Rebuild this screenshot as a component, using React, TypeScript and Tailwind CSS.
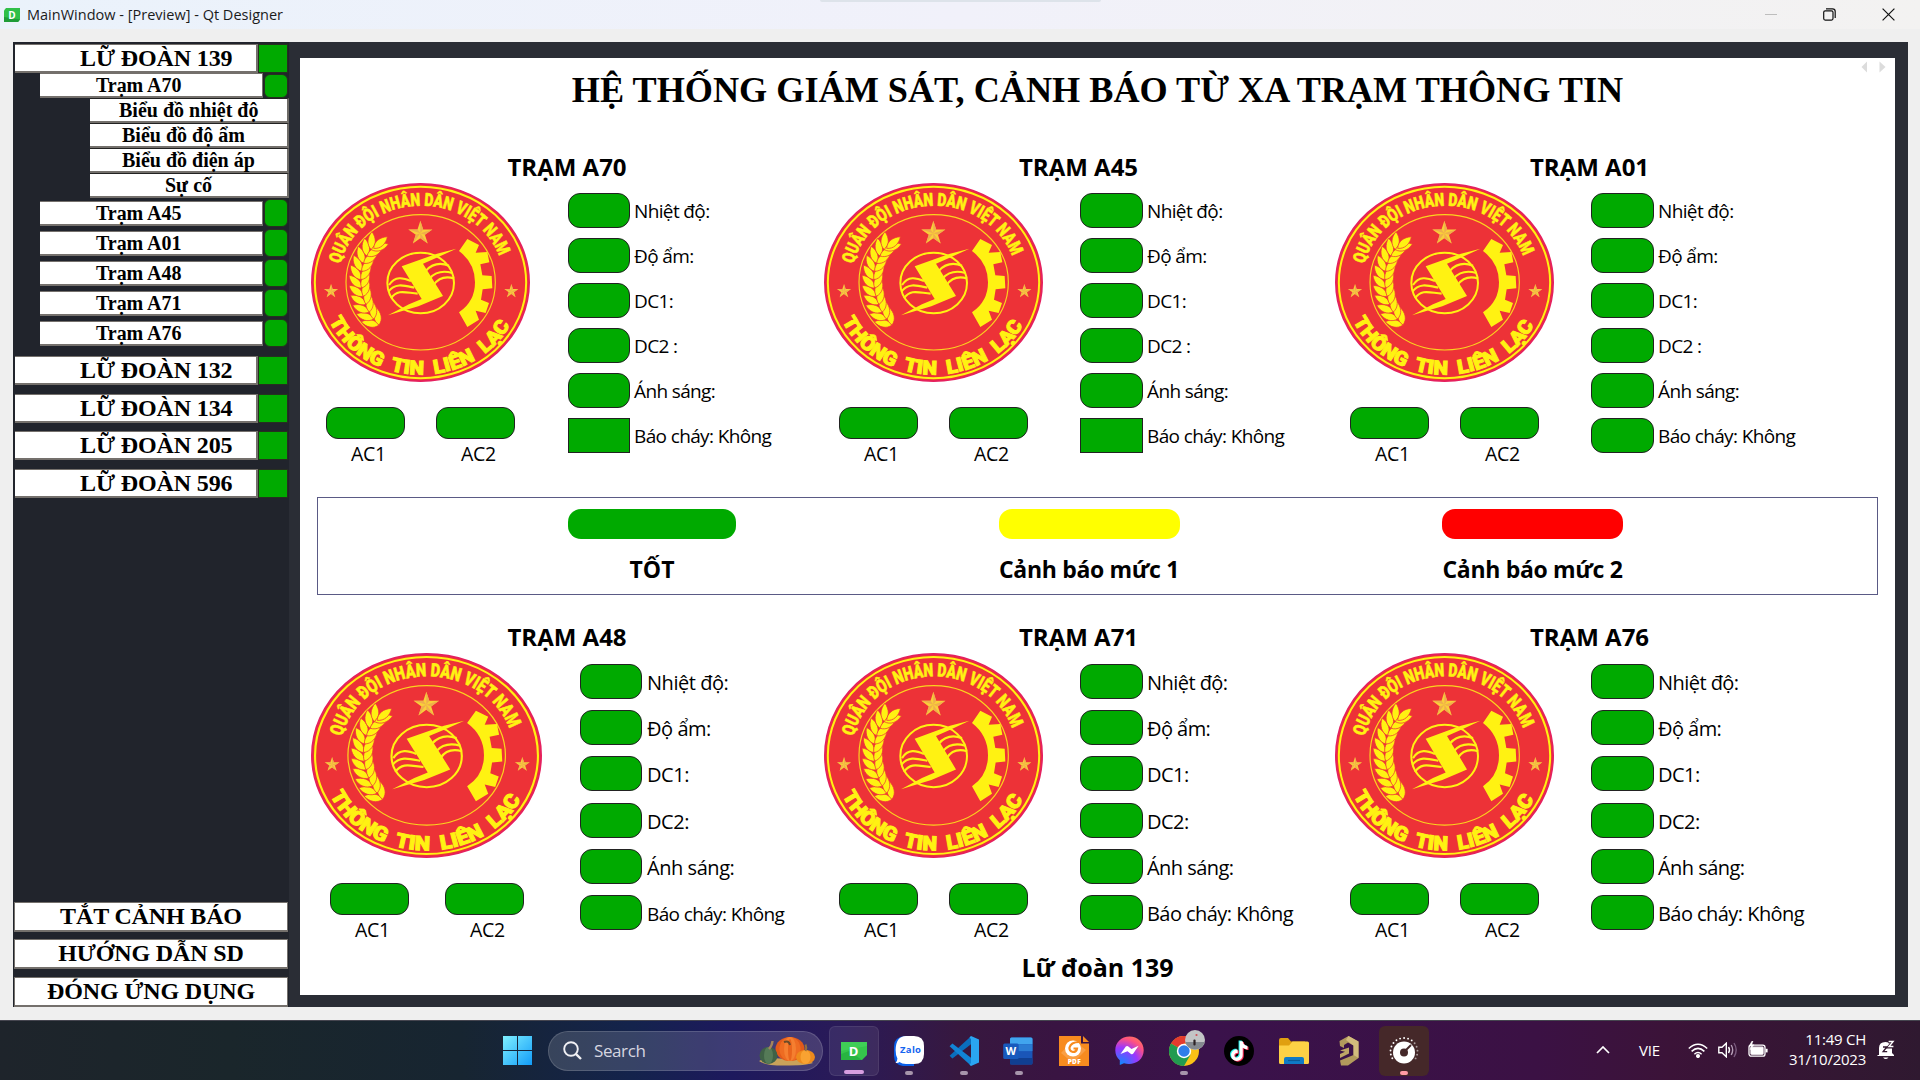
import React from "react";

const UI = "font-['Open_Sans','Noto_Sans',sans-serif]";
const SERIF = "font-['Liberation_Serif',serif]";

/* ---------- Emblem ---------- */

function starPoints(cx: number, cy: number, r: number) {
  const pts: [number, number][] = [];
  for (let i = 0; i < 10; i++) {
    const a = (-90 + i * 36) * (Math.PI / 180);
    const k = i % 2 === 0 ? r : r * 0.38;
    pts.push([cx + k * Math.cos(a), cy + k * Math.sin(a)]);
  }
  return pts;
}

function Star({ cx, cy, r }: { cx: number; cy: number; r: number }) {
  const pts = starPoints(cx, cy, r);
  return (
    <g>
      <polygon points={pts.map((p) => p.join(",")).join(" ")} fill="#f9cf3a" />
      {[0, 2, 4, 6, 8].map((i) => (
        <polygon
          key={i}
          points={`${cx},${cy} ${pts[i].join(",")} ${pts[(i + 1) % 10].join(",")}`}
          fill="#efae4c"
        />
      ))}
    </g>
  );
}

const stem: [number, number, number][] = [
  [226, 450, -44],
  [210, 432, -38],
  [197, 411, -32],
  [187, 388, -24],
  [179, 364, -17],
  [174, 339, -9],
  [172, 314, 0],
  [174, 289, 9],
  [180, 265, 18],
  [190, 243, 28],
  [203, 224, 38],
];

function Wheat() {
  const leaf = "M0 0 C-15 -14 -14 -36 0 -54 C14 -36 15 -14 0 0Z";
  return (
    <g fill="#fff212" stroke="#ed3237" strokeWidth="2" transform="translate(-4 0)">
      {stem.map(([x, y, a], i) => (
        <g key={i} transform={`translate(${x} ${y}) rotate(${a})`}>
          <path d={leaf} transform="rotate(-36)" />
          <path d={leaf} transform="rotate(34)" />
        </g>
      ))}
      <path d={leaf} transform="translate(210 220) rotate(50)" />
    </g>
  );
}

function Emblem({ id, className }: { id: string; className: string }) {
  return (
    <svg viewBox="18 24 657 597" preserveAspectRatio="none" className={className}>
      <ellipse cx="346.5" cy="322.5" rx="326" ry="296" fill="#ed3237" stroke="#e5205f" strokeWidth="5" />
      <ellipse cx="346.5" cy="322.5" rx="317" ry="287" fill="none" stroke="#fff212" strokeWidth="6" />
      <ellipse cx="347" cy="322" rx="224" ry="203" fill="none" stroke="#fbd41e" strokeWidth="3.5" />
      <path id={`${id}-t`} d="M107 267 A246 219 0 0 1 590 272" fill="none" />
      <path id={`${id}-b`} d="M73 438 A300 271 0 0 0 626 428" fill="none" />
      <g fill="#fff212" stroke="#fff212" strokeWidth="1.5" className="font-['Roboto',sans-serif] font-black">
        <text fontSize="54">
          <textPath href={`#${id}-t`} textLength="618" lengthAdjust="spacingAndGlyphs">
            QUÂN ĐỘI NHÂN DÂN VIỆT NAM
          </textPath>
        </text>
        <text fontSize="58" wordSpacing="16" strokeWidth="3">
          <textPath href={`#${id}-b`} textLength="656" lengthAdjust="spacingAndGlyphs">
            THÔNG TIN LIÊN LẠC
          </textPath>
        </text>
      </g>
      <Star cx={346} cy={175} r={38} />
      <Star cx={78} cy={349} r={22} />
      <Star cx={619} cy={349} r={22} />
      <Wheat />
      <path
        d="M487 192 L522 210 L512 233 L547 231 L553 262 L526 268 L532 301 L560 303 L562 340 L533 343 L528 374 L552 384 L542 414 L512 407 L522 434 L487 456 L462 412 Q510 380 510 322 Q510 264 462 228Z"
        fill="#fff212"
      />
      <ellipse cx="347" cy="324" rx="100" ry="91" fill="none" stroke="#fff212" strokeWidth="6" />
      <g fill="none" stroke="#fff212" strokeWidth="6.5">
        <path d="M362 288 C380 268 405 262 432 272" />
        <path d="M374 310 C392 290 415 286 442 294" />
        <path d="M386 330 C402 306 425 304 447 310" />
        <path d="M252 330 C270 302 295 308 318 318" />
        <path d="M250 350 C270 322 300 332 328 338" />
        <path d="M258 370 C278 340 305 354 338 356" />
      </g>
      <path
        d="M454 221 L396 236 L290 274 L350 372 L312 388 L249 421 L340 394 L414 363 L354 266 L400 246Z"
        fill="#fff212"
      />
    </svg>
  );
}

/* ---------- Sidebar ---------- */

function Brigade({ name, className }: { name: string; className: string }) {
  return (
    <div className={`flex h-[29px] shrink-0 pl-0.5 ${className}`}>
      <div className={`h-[29px] w-[243px] border-t border-b-2 border-r-2 border-[#74706c] bg-white pl-[65px] text-[24px] leading-[26px] font-bold tracking-[-0.12px] whitespace-nowrap ${SERIF}`}>
        {name}
      </div>
      <div className="h-[29px] w-[30px] border border-[#26301f] bg-[#00aa00]" />
    </div>
  );
}

function SideStation({ name, className, dot }: { name: string; className: string; dot: string }) {
  return (
    <div className={`flex shrink-0 items-center pl-[27px] ${className}`}>
      <div className={`h-[25px] w-[223px] border-t border-r border-b-2 border-[#74706c] bg-white pl-[56px] text-[20px] leading-[23px] font-bold tracking-[-0.05px] whitespace-nowrap ${SERIF}`}>
        {name}
      </div>
      <div className={`ml-px w-6 rounded-[6px] border border-[#26301f] bg-[#00aa00] ${dot}`} />
    </div>
  );
}

function SubItem({ name, pad }: { name: string; pad: string }) {
  return (
    <div className={`ml-[77px] h-[25px] w-[199px] shrink-0 border-t border-r-2 border-b-2 border-t-[#222] border-r-[#6d6a66] border-b-[#74706c] bg-white text-[20px] leading-[22px] font-bold whitespace-nowrap ${pad} ${SERIF}`}>
      {name}
    </div>
  );
}

function SideButton({ name, className }: { name: string; className: string }) {
  return (
    <div className={`ml-px h-[30px] w-[274px] shrink-0 border border-b-2 border-[#74706c] bg-white text-center text-[24px] leading-[27px] font-bold tracking-[-0.15px] whitespace-nowrap ${SERIF} ${className}`}>
      {name}
    </div>
  );
}

function Sidebar() {
  return (
    <div className="flex h-[965px] w-[276px] shrink-0 flex-col bg-[#21242c]">
      <Brigade name="LỮ ĐOÀN 139" className="mt-[2px]" />
      <SideStation name="Trạm A70" className="h-[25px]" dot="h-[24px]" />
      <div className="flex flex-col">
        <SubItem name="Biểu đồ nhiệt độ" pad="pl-[29px]" />
        <SubItem name="Biểu đồ độ ẩm" pad="pl-[32px]" />
        <SubItem name="Biểu đồ điện áp" pad="pl-[32px]" />
        <SubItem name="Sự cố" pad="pl-[75px]" />
      </div>
      <div className="mt-px flex flex-col gap-0.5">
        {["Trạm A45", "Trạm A01", "Trạm A48", "Trạm A71", "Trạm A76"].map((n) => (
          <SideStation key={n} name={n} className="h-[28px]" dot="h-[28px]" />
        ))}
      </div>
      <Brigade name="LỮ ĐOÀN 132" className="mt-[9px]" />
      <Brigade name="LỮ ĐOÀN 134" className="mt-[9px]" />
      <Brigade name="LỮ ĐOÀN 205" className="mt-2" />
      <Brigade name="LỮ ĐOÀN 596" className="mt-[9px]" />
      <SideButton name="TẮT CẢNH BÁO" className="mt-auto" />
      <SideButton name="HƯỚNG DẪN SD" className="mt-[7px]" />
      <SideButton name="ĐÓNG ỨNG DỤNG" className="mt-2" />
    </div>
  );
}

/* ---------- Stations ---------- */

type Variant = "top" | "bottomWide" | "bottom";

type StationInfo = {
  name: string;
  width: string;
  variant: Variant;
  dc2: string;
  squareFire?: boolean;
};

const left = { top: "w-[219px]", bottom: "w-[219px]", bottomWide: "w-[231px]" };
const emblem = { top: "h-[199px] w-[219px]", bottom: "h-[205px] w-[219px]", bottomWide: "h-[205px] w-[231px]" };
const acRow = { top: "ml-[15px] gap-[31px]", bottom: "ml-[15px] gap-[31px]", bottomWide: "ml-[19px] gap-[36px]" };
const sensors = { top: "mt-2.5 gap-[10px]", bottom: "mt-[11px] gap-[11.2px]", bottomWide: "mt-[11px] gap-[11.2px]" };
const labelGap = { top: "gap-1", bottom: "gap-1", bottomWide: "gap-[5px]" };
const labelText = {
  top: "text-[19px] tracking-[-0.63px]",
  bottom: "text-[20px] tracking-[-0.55px]",
  bottomWide: "text-[20px] tracking-[-0.45px]",
};

function Station({ name, width, variant, dc2, squareFire }: StationInfo) {
  const labels = ["Nhiệt độ:", "Độ ẩm:", "DC1:", dc2, "Ánh sáng:", "Báo cháy: Không"];
  const isFirst = width === "w-[513px]";
  return (
    <div className={`shrink-0 ${width}`}>
      <div className={`h-[43px] text-center text-[24px] leading-[54px] font-bold ${isFirst ? "w-[512px]" : "w-[509px]"}`}>
        {name}
      </div>
      <div className={`flex ${isFirst ? "gap-[38px]" : "gap-[37px]"}`}>
        <div className={`shrink-0 ${left[variant]}`}>
          <Emblem id={name.replace(/\W/g, "")} className={emblem[variant]} />
          <div className={`mt-[25px] flex ${acRow[variant]}`}>
            {["AC1", "AC2"].map((ac) => (
              <div key={ac} className="w-[79px]">
                <div className="h-[32px] rounded-[12px] border border-[#222] bg-[#00aa00]" />
                <div className="pl-[6px] text-center text-[19.5px] leading-[30px] tracking-[-0.3px]">{ac}</div>
              </div>
            ))}
          </div>
        </div>
        <div className={`flex flex-col ${sensors[variant]}`}>
          {labels.map((l, i) => (
            <div key={l} className={`flex h-[35px] items-center ${labelGap[variant]}`}>
              <div
                className={`h-[35px] border border-[#222] bg-[#00aa00] ${isFirst ? "w-[62px]" : "w-[63px]"} ${
                  squareFire && i === 5 ? "" : "rounded-[12px]"
                }`}
              />
              <div
                className={`whitespace-nowrap ${variant === "top" ? "pt-px" : "pt-[3px]"} ${
                  variant === "bottomWide" && i === 5 ? labelText.top : labelText[variant]
                }`}
              >
                {l}
              </div>
            </div>
          ))}
        </div>
      </div>
    </div>
  );
}

const topRow: StationInfo[] = [
  { name: "TRẠM A70", width: "w-[513px]", variant: "top", dc2: "DC2 :", squareFire: true },
  { name: "TRẠM A45", width: "w-[511px]", variant: "top", dc2: "DC2 :", squareFire: true },
  { name: "TRẠM A01", width: "w-[511px]", variant: "top", dc2: "DC2 :" },
];

const bottomRow: StationInfo[] = [
  { name: "TRẠM A48", width: "w-[513px]", variant: "bottomWide", dc2: "DC2:" },
  { name: "TRẠM A71", width: "w-[511px]", variant: "bottom", dc2: "DC2:" },
  { name: "TRẠM A76", width: "w-[511px]", variant: "bottom", dc2: "DC2:" },
];

function Legend() {
  return (
    <div className="ml-[17px] flex h-[98px] w-[1561px] border border-[#5a5a85] pt-[11px] text-[23px] font-bold">
      <div className="ml-[250px] flex w-[168px] flex-col items-center">
        <div className="h-[30px] w-full rounded-[13px] bg-[#00aa00]" />
        <div className="mt-[13px] leading-[34px]">TỐT</div>
      </div>
      <div className="ml-[263px] flex w-[181px] flex-col items-center">
        <div className="h-[30px] w-full rounded-[13px] bg-[#ffff00]" />
        <div className="mt-[13px] pr-px leading-[34px] tracking-[-0.32px] whitespace-nowrap">Cảnh báo mức 1</div>
      </div>
      <div className="ml-[262px] flex w-[181px] flex-col items-center">
        <div className="h-[30px] w-full rounded-[13px] bg-[#ff0000]" />
        <div className="mt-[13px] leading-[34px] tracking-[-0.32px] whitespace-nowrap">Cảnh báo mức 2</div>
      </div>
    </div>
  );
}

function Content() {
  return (
    <div className="mt-4 ml-[11px] h-[937px] w-[1595px] overflow-hidden bg-white">
      <div className="relative h-[82px] pt-[8px] text-center">
        <h1 className={`text-[36.2px] leading-[48px] font-bold whitespace-nowrap ${SERIF}`}>
          HỆ THỐNG GIÁM SÁT, CẢNH BÁO TỪ XA TRẠM THÔNG TIN
        </h1>
        <svg viewBox="0 0 26 12" className="absolute top-[3px] right-[8px] h-3 w-[26px]" fill="#dcdcdc">
          <path d="M6 0.5V11.5L0.5 6Z" />
          <path d="M18.5 0.5V11.5L24.5 6Z" />
        </svg>
      </div>
      <div className="ml-[11px] flex h-[357px]">
        {topRow.map((s) => (
          <Station key={s.name} {...s} />
        ))}
      </div>
      <Legend />
      <div className="mt-[15px] ml-[11px] flex h-[340px]">
        {bottomRow.map((s) => (
          <Station key={s.name} {...s} />
        ))}
      </div>
      <div className="text-center text-[25px] leading-[34px] font-bold">Lữ đoàn 139</div>
    </div>
  );
}

/* ---------- Window chrome ---------- */

function TitleBar() {
  return (
    <div className="flex h-[29px] items-center bg-linear-to-r from-[#eaf2fb] via-[#f1f1fa] to-[#f3f2f1] pl-1">
      <svg viewBox="0 0 16 14" className="h-[14px] w-4">
        <path d="M2 0H16V11.5L14 14H0V2.5Z" fill="#2fbf48" />
        <path d="M0 9V14H14L16 11.5Z" fill="#1f9c38" />
        <text x="8" y="10.6" textAnchor="middle" fontSize="10" fontWeight="700" fill="#fff">
          D
        </text>
      </svg>
      <div className="ml-[7px] text-[14.5px] tracking-[0.01px] whitespace-nowrap text-[#1b1b1b]">
        MainWindow - [Preview] - Qt Designer
      </div>
      <div className="ml-auto flex items-center gap-[46px] pr-[25px]">
        <svg viewBox="0 0 12 12" className="h-3 w-3" stroke="#bdbdbd">
          <path d="M0 5.5H12" />
        </svg>
        <svg viewBox="0 0 13 13" className="h-[13px] w-[13px]" fill="none" stroke="#111" strokeWidth="1.2">
          <rect x="0.7" y="2.8" width="9.3" height="9.3" rx="1.5" />
          <path d="M3 0.8H9.5Q12.2 0.8 12.2 3.5V10" />
        </svg>
        <svg viewBox="0 0 13 13" className="h-[13px] w-[13px]" stroke="#111" strokeWidth="1.2">
          <path d="M0.6 0.6L12.4 12.4M12.4 0.6L0.6 12.4" />
        </svg>
      </div>
    </div>
  );
}

/* ---------- Taskbar ---------- */

function DesignerIcon() {
  return (
    <svg viewBox="0 0 26 18" className="h-[18px] w-[26px]">
      <path d="M0 0H26V13L21 18H0Z" fill="#35c64c" />
      <path d="M0 9L26 4V0H0Z" fill="#4ad760" opacity=".5" />
      <path d="M0 12V18H21L8 9Z" fill="#1fa93a" opacity=".6" />
      <text x="12.6" y="13.8" textAnchor="middle" fontSize="13" fontWeight="700" fill="#fff">
        D
      </text>
    </svg>
  );
}

function ZaloIcon() {
  return (
    <svg viewBox="0 0 30 30" className="h-[30px] w-[30px]">
      <path d="M11 0H20V30H9Q0 29 0 20V10Q0 1 11 0Z" fill="#0a5fe8" />
      <path d="M12 0H20Q30 0 30 10V18Q30 28 20 28H12Q8 28 5.5 26Q4 27.2 1.5 26.8Q3.5 25 3.4 22.5Q1.6 19 1.6 14Q2 0 12 0Z" fill="#fff" />
      <text x="16.5" y="17.2" textAnchor="middle" fontSize="9.5" fontWeight="700" fill="#1565f0" textLength="21">
        Zalo
      </text>
    </svg>
  );
}

function CodeIcon() {
  return (
    <svg viewBox="0 0 30 30" className="h-[30px] w-[30px]">
      <path d="M0.6 19.8L22 0.3V8.2L3.4 22.6Z" fill="#0a6ebd" />
      <path d="M0.6 10.2L3.4 7.4L22 21.8V29.7Z" fill="#1184d6" />
      <path d="M22 0L30 3.6V26.4L22 30L20.5 28.6L22 27V3L20.5 1.4Z" fill="#2aa5f2" />
    </svg>
  );
}

function WordIcon() {
  return (
    <svg viewBox="0 0 30 28" className="h-7 w-[30px] -translate-x-px">
      <rect x="7" y="0.5" width="22.5" height="27" rx="1.5" fill="#1a56b8" />
      <path d="M7 2Q7 0.5 8.5 0.5H28Q29.5 0.5 29.5 2V7.3H7Z" fill="#41a5ee" />
      <rect x="7" y="7.3" width="22.5" height="6.8" fill="#2b7cd3" />
      <rect x="7" y="21" width="22.5" height="6.5" rx="1" fill="#103f91" />
      <rect x="0.2" y="6.5" width="15.5" height="15.5" rx="1.5" fill="#185abd" />
      <text x="7.9" y="18.3" textAnchor="middle" fontSize="11" fontWeight="700" fill="#fff">
        W
      </text>
    </svg>
  );
}

function FoxitIcon() {
  return (
    <svg viewBox="0 0 30 30" className="h-[30px] w-[30px]">
      <path d="M0 0H22V7.5H30V30H0Z" fill="#f78b1f" />
      <path d="M24 0L30 6H24Z" fill="#f78b1f" />
      <path d="M14 4L27 14L14 27L2 17Z" fill="#fbac5b" opacity=".6" />
      <circle cx="14" cy="12.5" r="8" fill="#fff" />
      <path d="M20 6Q12 6 10.5 11.5Q10 15 14 16Q17.5 16 18 12.5H14.5" fill="none" stroke="#f78b1f" strokeWidth="2.2" />
      <text x="15.2" y="27.8" textAnchor="middle" fontSize="6.5" fontWeight="800" fill="#fff" textLength="13">
        PDF
      </text>
    </svg>
  );
}

function MessengerIcon() {
  return (
    <svg viewBox="0 0 29 29" className="h-[29px] w-[29px]">
      <defs>
        <radialGradient id="msgr" cx="0.2" cy="1" r="1.1">
          <stop offset="0" stopColor="#0a8cff" />
          <stop offset="0.55" stopColor="#9b36ff" />
          <stop offset="0.85" stopColor="#ff5280" />
          <stop offset="1" stopColor="#ff7061" />
        </radialGradient>
      </defs>
      <path d="M14.5 0.5C6.3 0.5 0.3 6.4 0.3 14.2C0.3 18.3 2 21.8 4.8 24.3V28.9L9 27.2C18 30 28.7 24.8 28.7 14.2C28.7 6.4 22.7 0.5 14.5 0.5Z" fill="url(#msgr)" />
      <path d="M5.5 18L10.8 10.6Q11.8 9.4 13 10.3L16.5 13L23.6 9.8L18.3 17.6Q17.3 18.9 16 18L12.5 15.2Z" fill="#fff" />
    </svg>
  );
}

function ChromeIcon() {
  return (
    <div className="relative h-[30px] w-[30px]">
      <svg viewBox="0 0 30 30" className="h-[30px] w-[30px]">
        <circle cx="15" cy="15" r="15" fill="#fbc116" />
        <path d="M15 15L2 7.5A15 15 0 0 1 28 7.5H15Z" fill="#e33b2e" />
        <path d="M2 7.5A15 15 0 0 0 15 30L21.5 18.7L15 15Z" fill="#219b50" />
        <circle cx="15" cy="15" r="7.2" fill="#fff" />
        <circle cx="15" cy="15" r="5.7" fill="#2f7de9" />
      </svg>
      <svg viewBox="0 0 20 20" className="absolute -top-[6px] left-4 h-5 w-5">
        <circle cx="10" cy="10" r="10" fill="#c3c5c6" />
        <path d="M0.3 12H19.7A10 10 0 0 1 0.3 12Z" fill="#84898f" />
        <rect x="8.4" y="9.5" width="2.2" height="6" rx="1" fill="#2d2326" />
        <circle cx="11.5" cy="5" r="1.1" fill="#d0505a" />
      </svg>
    </div>
  );
}

function TikTokIcon() {
  const note = "M15.6 6.5H18.3C18.6 9 20 10.4 22.4 10.6V13.4C20.8 13.4 19.5 12.9 18.3 12.1V18.2C18.3 25 8.6 25.5 8.2 18.7C8.1 15.6 10.8 13.3 13.9 13.8V16.8C12.2 16.4 11 17.4 11 18.8C11.2 21.6 15.6 21.4 15.6 18.1Z";
  return (
    <svg viewBox="0 0 30 30" className="h-[30px] w-[30px]">
      <circle cx="15" cy="15" r="15" fill="#000" />
      <g transform="translate(-2.2 -2.2) scale(1.15)">
        <path d={note} fill="#25f4ee" transform="translate(-1 -0.7)" />
        <path d={note} fill="#fe2c55" transform="translate(0.8 0.7)" />
        <path d={note} fill="#fff" transform="translate(-0.1 0)" />
      </g>
    </svg>
  );
}

function ExplorerIcon() {
  return (
    <svg viewBox="0 0 30 26" className="h-[26px] w-[30px]">
      <path d="M0 2Q0 0 2 0H9L12 3.5H26V10H0Z" fill="#e0a010" />
      <path d="M0 7.5H10L13.5 3.5H28.5Q30 3.5 30 5V24.5Q30 26 28.5 26H1.5Q0 26 0 24.5Z" fill="#fdd145" />
      <path d="M5 26V21Q5 19 7 19H23Q25 19 25 21V26Z" fill="#0f7ac6" />
      <path d="M9 22.5H21" stroke="#0b5a96" strokeWidth="1.2" />
    </svg>
  );
}

function AltiumIcon() {
  return (
    <svg viewBox="0 0 20 30" className="h-[30px] w-5">
      <path d="M0.5 5L9.5 0L19.5 5.5V22L9 29.5L2 29.5L1 24.5L14.5 19V9.5L9 6.5L5 9V12L1 10Z" fill="#b29a5c" />
      <path d="M9.5 0L19.5 5.5V22L14.5 19V9.5L7 4Z" fill="#d2bc7d" />
      <path d="M1 14.5L10 11.5V17.5L1 22V18L6 15.8Z" fill="#bfa667" />
    </svg>
  );
}

function KnobIcon() {
  const dots = Array.from({ length: 15 }, (_, i) => {
    const a = ((150 + i * 17.2) * Math.PI) / 180;
    return { x: 15 + 13.5 * Math.cos(a), y: 15.5 + 13.5 * Math.sin(a), o: i > 9 ? 0.55 : 1 };
  });
  return (
    <svg viewBox="0 0 30 30" className="h-[30px] w-[30px]">
      {dots.map((d, i) => (
        <circle key={i} cx={d.x} cy={d.y} r="0.95" fill="#fff" opacity={d.o} />
      ))}
      <circle cx="15" cy="16.5" r="11" fill="#fff" />
      <circle cx="15" cy="16.5" r="4" fill="#452829" />
      <path d="M15.5 15.5L22 9" stroke="#452829" strokeWidth="2" />
    </svg>
  );
}

const apps: { icon: React.ReactNode; tile: string; mark: string }[] = [
  { icon: <DesignerIcon />, tile: "bg-white/8 border border-white/8", mark: "w-5 bg-[#d79ee0]" },
  { icon: <ZaloIcon />, tile: "", mark: "w-2 bg-[#a795ab]" },
  { icon: <CodeIcon />, tile: "", mark: "w-2 bg-[#a795ab]" },
  { icon: <WordIcon />, tile: "", mark: "w-2 bg-[#a795ab]" },
  { icon: <FoxitIcon />, tile: "", mark: "" },
  { icon: <MessengerIcon />, tile: "", mark: "" },
  { icon: <ChromeIcon />, tile: "", mark: "w-2 bg-[#a795ab]" },
  { icon: <TikTokIcon />, tile: "", mark: "" },
  { icon: <ExplorerIcon />, tile: "", mark: "" },
  { icon: <AltiumIcon />, tile: "", mark: "" },
  { icon: <KnobIcon />, tile: "bg-[#452829]", mark: "w-2 bg-[#ff9aa5]" },
];

function PumpkinArt() {
  return (
    <svg viewBox="0 0 57 30" className="h-[30px] w-[57px]">
      <path d="M0 25Q6 21 28 23Q50 24 54 27Q48 29.5 25 29.5Q6 29.5 0 25Z" fill="#c9a25a" />
      <ellipse cx="31" cy="13" rx="14.5" ry="12" fill="#e2591a" />
      <ellipse cx="31" cy="13" rx="10.5" ry="12" fill="#ee6c22" />
      <ellipse cx="31" cy="13" rx="6" ry="12" fill="#f57f30" />
      <ellipse cx="31" cy="14" rx="2" ry="11" fill="#e8641c" />
      <path d="M25 6Q30 4 31 9" stroke="#6a4a28" strokeWidth="2" fill="none" />
      <ellipse cx="9.5" cy="19.5" rx="9" ry="8.5" fill="#3f6146" />
      <ellipse cx="9.5" cy="19.5" rx="4.5" ry="8.5" fill="#557a57" />
      <path d="M10 13Q13 10 13.5 5" stroke="#a3835c" strokeWidth="2.4" fill="none" />
      <ellipse cx="46.5" cy="21" rx="9.5" ry="7" fill="#ee8a1c" />
      <ellipse cx="46.5" cy="21" rx="5" ry="7" fill="#f9a231" />
      <path d="M46.5 15Q48 12 46.5 8.5" stroke="#97713d" strokeWidth="2" fill="none" />
    </svg>
  );
}

function Tray() {
  return (
    <div className="ml-auto flex h-full items-center pb-px text-white">
      <svg viewBox="0 0 14 8" className="h-2 w-[14px]" fill="none" stroke="#fff" strokeWidth="1.7">
        <path d="M1 7L7 1L13 7" />
      </svg>
      <div className="ml-[29px] w-[22px] text-[15px] tracking-[-0.2px]">VIE</div>
      <svg viewBox="0 0 20 15" className="ml-[27px] h-[15px] w-5" fill="none" stroke="#fff" strokeWidth="1.5">
        <path d="M0.8 5.5Q10 -3 19.2 5.5" />
        <path d="M3.6 8.4Q10 2.4 16.4 8.4" />
        <path d="M6.4 11.2Q10 7.8 13.6 11.2" />
        <circle cx="10" cy="13" r="1.3" fill="#fff" />
      </svg>
      <svg viewBox="0 0 20 16" className="ml-[10px] h-4 w-5" fill="none" stroke="#fff" strokeWidth="1.4">
        <path d="M0.8 5.2H4L8.3 1.2V14.8L4 10.8H0.8Z" />
        <path d="M10.5 5Q12.5 8 10.5 11" />
        <path d="M13.2 3Q16.2 8 13.2 13" stroke="#b49db6" />
        <path d="M16 1Q20.4 8 16 15" stroke="#7a5b7e" />
      </svg>
      <svg viewBox="0 0 20 16" className="ml-[10px] h-4 w-5 -translate-y-px" fill="none" stroke="#fff" strokeWidth="1.3">
        <rect x="1" y="4.2" width="16" height="11" rx="2.2" />
        <rect x="3" y="6.2" width="12" height="7" rx="0.8" fill="#fff" />
        <path d="M18.6 7.8V11.4" strokeWidth="2" />
        <path d="M4 0L1 5H3.2L2 9L6 3.8H3.8L5 0Z" fill="#fff" strokeWidth="0.4" />
      </svg>
      <div className="ml-4 w-[82px] pb-[2px] text-right text-[15px] leading-5 tracking-[-0.25px] whitespace-nowrap">
        <div>11:49 CH</div>
        <div>31/10/2023</div>
      </div>
      <svg viewBox="0 0 18 20" className="ml-[11px] h-5 w-[18px]" fill="#fff">
        <path d="M2 15V8Q2 2 8.5 2Q15 2 15 8V13L17 15V16H0.5V15Z" />
        <path d="M6 17.5H11.5Q8.7 20.5 6 17.5Z" />
        <path d="M11.2 1.6H16.4L12 6.8H17" fill="none" stroke="#32172f" strokeWidth="3.4" />
        <path d="M6 7H9.8L6.2 11.6H10.2" fill="none" stroke="#32172f" strokeWidth="1.4" />
        <path d="M11.6 1.6H16L12 6.6H16.4" fill="none" stroke="#fff" strokeWidth="1.5" />
      </svg>
    </div>
  );
}

function Taskbar() {
  return (
    <div className="flex h-[60px] items-center border-t border-[#45454f] bg-[linear-gradient(90deg,#1e242b_0%,#1a262b_12%,#172531_24%,#14234c_33%,#1d195d_38%,#2a1a58_44%,#37183f_50%,#391442_55%,#3a124b_63%,#3b1144_80%,#3b1338_87%,#2f1930_100%)] pr-[25px] pl-[503px]">
      <svg viewBox="0 0 29 29" className="h-[29px] w-[29px] shrink-0">
        <defs>
          <linearGradient id="win" x1="0" y1="0" x2="29" y2="29" gradientUnits="userSpaceOnUse">
            <stop offset="0" stopColor="#7ff0ff" />
            <stop offset="1" stopColor="#129cf8" />
          </linearGradient>
        </defs>
        <path d="M0 0H14V14H0ZM15 0H29V14H15ZM0 15H14V29H0ZM15 15H29V29H15Z" fill="url(#win)" />
      </svg>
      <div className="ml-4 flex h-10 w-[275px] shrink-0 items-center rounded-full border border-white/15 bg-white/15 pr-[6px] pl-[14px]">
        <svg viewBox="0 0 19 19" className="h-[19px] w-[19px]" fill="none" stroke="#f0f0f4" strokeWidth="1.9">
          <circle cx="8" cy="8" r="6.8" />
          <path d="M12.8 12.8L18 18" strokeWidth="2.4" />
        </svg>
        <div className="ml-3 text-[17px] tracking-[-0.4px] text-[#d6d6e0]">Search</div>
        <div className="ml-auto">
          <PumpkinArt />
        </div>
      </div>
      <div className="ml-[3.5px] flex h-full items-center">
        {apps.map((a, i) => (
          <div key={i} className="flex w-[55px] justify-center">
            <div className={`relative flex h-[50px] w-[50px] items-center justify-center rounded-md ${a.tile}`}>
              {a.icon}
              {a.mark && <div className={`absolute bottom-px h-1 rounded-full ${a.mark}`} />}
            </div>
          </div>
        ))}
      </div>
      <Tray />
    </div>
  );
}

export default function App() {
  return (
    <div className={`flex h-[1080px] w-[1920px] flex-col overflow-hidden bg-[#efefef] text-black ${UI}`}>
      <div className="relative">
        <TitleBar />
        <div className="absolute top-0 left-[820px] h-[2px] w-[281px] rounded-b bg-[#dde3ea]" />
      </div>
      <div className="mt-[13px] ml-[13px] flex h-[965px] w-[1895px] bg-[#2a2d35]">
        <Sidebar />
        <Content />
      </div>
      <div className="mt-auto">
        <Taskbar />
      </div>
    </div>
  );
}
